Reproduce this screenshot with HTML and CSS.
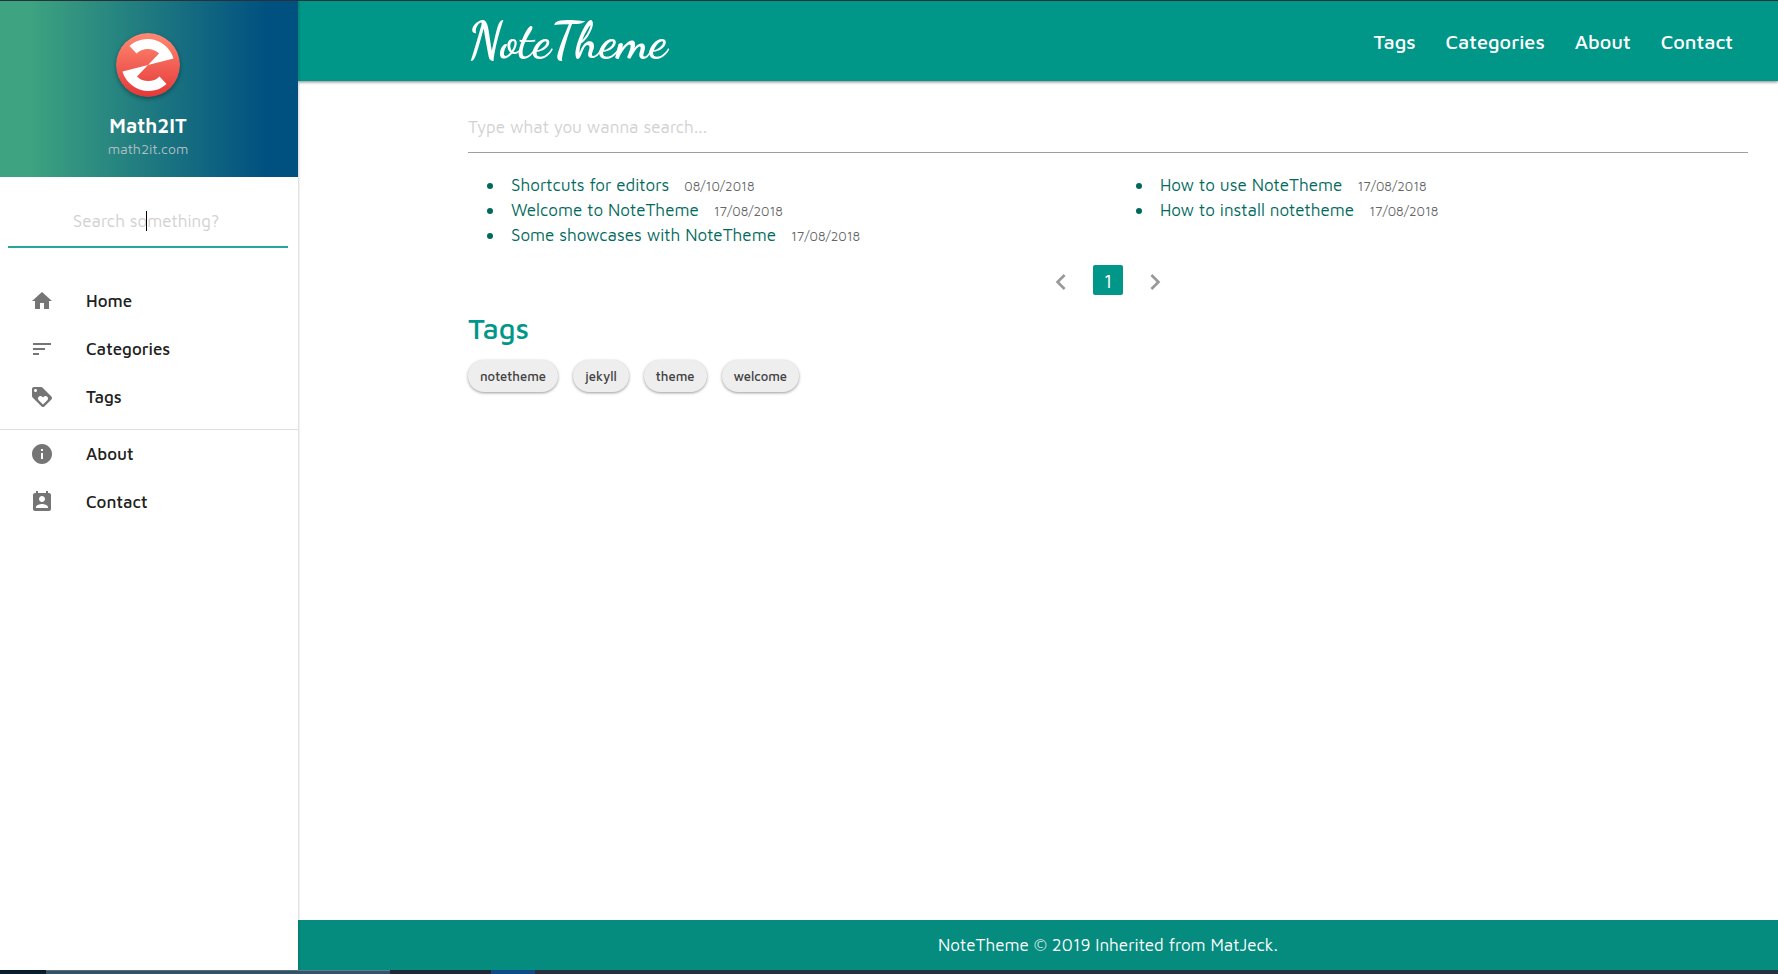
FILE: index.html
```html
<!DOCTYPE html>
<html lang="en">
<head>
<meta charset="utf-8">
<meta name="viewport" content="width=device-width, initial-scale=1">
<title>NoteTheme</title>
<link rel="stylesheet" href="styles.css">
</head>
<body>
<div class="layout">
  <aside class="sidebar">
    <div class="profile">
      <svg class="profile-logo" viewBox="0 0 64 64" aria-hidden="true">
        <defs><linearGradient id="badge" x1="0" y1="0" x2="0" y2="1"><stop offset="0" stop-color="#ff8a73"/><stop offset="1" stop-color="#e53737"/></linearGradient></defs>
        <circle cx="32" cy="32" r="32" fill="url(#badge)"/>
        <path fill="#fff" d="M13.500 13A27 27 0 0 1 57.500 25.500L32 32L43 20.500A16 16 0 0 0 20.500 20.500Z"/>
        <path fill="#fff" d="M50.500 51A27 27 0 0 1 6.500 38.500L32 32L21 43.500A16 16 0 0 0 43.500 43.500Z"/>
      </svg>
      <a class="profile-name" href="#">Math2IT</a>
      <a class="profile-site" href="#">math2it.com</a>
    </div>
    <form class="side-search">
      <input class="side-input" type="text" placeholder="Search something?" aria-label="Search something">
      <span class="caret"></span>
    </form>
    <nav class="side-nav" aria-label="Sidebar">
      <a class="side-link" href="#"><svg class="icon" viewBox="0 0 24 24"><path d="M10 20v-6h4v6h5v-8h3L12 3 2 12h3v8z"/></svg>Home</a>
      <a class="side-link" href="#"><svg class="icon" viewBox="0 0 24 24"><path d="M3 18h6v-2H3v2zM3 6v2h18V6H3zm0 7h12v-2H3v2z"/></svg>Categories</a>
      <a class="side-link" href="#"><svg class="icon" viewBox="0 0 24 24"><path d="M21.410 11.580l-9-9C12.050 2.220 11.550 2 11 2H4c-1.100 0-2 .9-2 2v7c0 .55.22 1.050.59 1.420l9 9c.36.36.86.58 1.410.58s1.050-.22 1.410-.59l7-7c.37-.36.59-.86.59-1.410s-.23-1.060-.59-1.420zM5.500 7C4.670 7 4 6.330 4 5.500S4.670 4 5.500 4 7 4.670 7 5.500 6.330 7 5.500 7zm11.770 8.270L13 19.540l-4.270-4.270C8.280 14.810 8 14.190 8 13.500c0-1.380 1.120-2.500 2.500-2.500.69 0 1.320.28 1.770.74l.73.72.73-.73c.45-.45 1.080-.73 1.770-.73 1.380 0 2.500 1.120 2.500 2.500 0 .69-.28 1.320-.73 1.770z"/></svg>Tags</a>
      <hr class="side-divider">
      <a class="side-link" href="#"><svg class="icon" viewBox="0 0 24 24"><path d="M12 2C6.480 2 2 6.480 2 12s4.480 10 10 10 10-4.480 10-10S17.520 2 12 2zm1 15h-2v-6h2v6zm0-8h-2V7h2v2z"/></svg>About</a>
      <a class="side-link" href="#"><svg class="icon" viewBox="0 0 24 24"><path d="M19 3h-1V1h-2v2H8V1H6v2H5c-1.110 0-2 .9-2 2v14c0 1.100.89 2 2 2h14c1.100 0 2-.9 2-2V5c0-1.100-.9-2-2-2zm-7 3c1.660 0 3 1.340 3 3s-1.340 3-3 3-3-1.340-3-3 1.340-3 3-3zm6 12H6v-1c0-2 4-3.100 6-3.100s6 1.100 6 3.100v1z"/></svg>Contact</a>
    </nav>
  </aside>
  <div class="page">
    <header class="topbar">
      <a class="brand" href="#">NoteTheme</a>
      <nav class="top-nav" aria-label="Main">
        <a class="top-link" href="#">Tags</a>
        <a class="top-link" href="#">Categories</a>
        <a class="top-link" href="#">About</a>
        <a class="top-link" href="#">Contact</a>
      </nav>
    </header>
    <main class="content">
      <input class="main-search" type="text" placeholder="Type what you wanna search..." aria-label="Search posts">
      <ul class="posts">
        <li class="post"><a class="post-link" href="#">Shortcuts for editors</a><time class="post-date">08/10/2018</time></li>
        <li class="post"><a class="post-link" href="#">Welcome to NoteTheme</a><time class="post-date">17/08/2018</time></li>
        <li class="post"><a class="post-link" href="#">Some showcases with NoteTheme</a><time class="post-date">17/08/2018</time></li>
        <li class="post"><a class="post-link" href="#">How to use NoteTheme</a><time class="post-date">17/08/2018</time></li>
        <li class="post"><a class="post-link" href="#">How to install notetheme</a><time class="post-date">17/08/2018</time></li>
      </ul>
      <nav class="pager" aria-label="Pages">
        <button class="pager-btn" type="button" aria-label="Previous"><svg class="chevron" viewBox="0 0 24 24"><path d="M15.410 7.410L14 6l-6 6 6 6 1.410-1.410L10.830 12z"/></svg></button>
        <button class="pager-btn pager-current" type="button" aria-current="page">1</button>
        <button class="pager-btn" type="button" aria-label="Next"><svg class="chevron" viewBox="0 0 24 24"><path d="M10 6L8.590 7.410 13.170 12l-4.580 4.590L10 18l6-6z"/></svg></button>
      </nav>
      <h2 class="heading">Tags</h2>
      <div class="chips">
        <a class="chip" href="#">notetheme</a>
        <a class="chip" href="#">jekyll</a>
        <a class="chip" href="#">theme</a>
        <a class="chip" href="#">welcome</a>
      </div>
    </main>
    <footer class="footer">NoteTheme © 2019 Inherited from MatJeck.</footer>
  </div>
</div>
<div class="taskbar"><span class="task-start"></span><span class="task-search"></span><span class="task-gap"></span><span class="task-active"></span></div>
</body>
</html>
```
FILE: styles.css
```css
* { box-sizing: border-box; }

body {
  margin: 0;
  min-height: 100vh;
  display: flex;
  flex-direction: column;
  border-top: 1px solid #263238;
  background: #fff;
  color: #212121;
  font-family: "Maven Pro", "Noto Sans", sans-serif;
  font-size: 17px;
}

a { color: inherit; text-decoration: none; }
input, button { font: inherit; border: 0; border-radius: 0; background: none; padding: 0; outline: 0; appearance: none; }

.layout { flex: 1; display: flex; }

.sidebar {
  position: relative;
  flex: 0 0 298px;
  background: #fff;
  box-shadow: 0 0 3px rgba(0, 0, 0, .3);
}

.profile {
  height: 176px;
  padding: 32px 2px 0 0;
  display: flex;
  flex-direction: column;
  align-items: center;
  background: linear-gradient(to right, #3da380 10%, #005080 90%);
}
.profile-logo { width: 64px; height: 64px; border-radius: 50%; box-shadow: 0 2px 4px rgba(0, 0, 0, .35); }
.profile-name { margin-top: 16px; color: #fff; font-size: 20px; line-height: 26px; font-weight: 600; }
.profile-site { color: #b2bfc5; font-size: 14px; line-height: 20px; }

.side-search { position: relative; padding: 18px 10px 0 8px; }
.side-input {
  width: 100%;
  height: 53px;
  padding-right: 4px;
  border-bottom: 2px solid #26a69a;
  text-align: center;
}
.side-input::placeholder, .main-search::placeholder { color: #d1d1d1; opacity: 1; }
.caret { position: absolute; left: 146px; top: 34px; width: 1px; height: 20px; background: #000; }

.side-nav { padding-top: 29px; font-weight: 500; }
.side-link { display: flex; align-items: center; gap: 32px; height: 48px; padding: 0 30px; }
.icon { width: 24px; height: 24px; fill: #757575; }
.side-divider { height: 1px; margin: 8px 0 0; border: 0; background: #e0e0e0; }

.page { flex: 1; min-width: 0; display: flex; flex-direction: column; }

.topbar {
  display: flex;
  align-items: center;
  justify-content: space-between;
  height: 80px;
  padding: 0 30px 0 170px;
  background: #009688;
  color: #fff;
  box-shadow: 0 1px 3px rgba(0, 0, 0, .5);
}
.brand { font: bold 50px "Dancing Script", "Liberation Serif", serif; }
.top-nav { display: flex; }
.top-link { padding: 0 15px; font-size: 20px; font-weight: 500; }

.content { flex: 1; padding: 21px 30px 0 170px; }
.main-search { display: block; width: 100%; height: 51px; border-bottom: 1px solid #9e9e9e; }

.posts { columns: 2; column-gap: 18px; margin: 20px 0 0; padding: 0; list-style: none; }
.post {
  display: flex;
  align-items: baseline;
  height: 25px;
  padding-left: 19px;
  line-height: 25px;
  color: #00695c;
  break-inside: avoid;
  font-weight: 300;
}
.post::before { content: ""; align-self: center; width: 6px; height: 6px; margin-right: 18px; border-radius: 50%; background: currentColor; }
.post-date { margin-left: 15px; font-size: 13px; color: #666; }

.pager { display: flex; justify-content: center; gap: 17px; margin-top: 16px; }
.pager-btn { display: flex; align-items: center; justify-content: center; width: 30px; height: 30px; font-size: 20px; }
.pager-current { border-radius: 2px; background: #009688; color: #fff; }
.chevron { flex: none; width: 32px; height: 32px; margin-top: 4px; fill: #999; }

.heading { margin: 16px 0 0; color: #009688; font-size: 29px; line-height: 34px; font-weight: 500; }

.chips { display: flex; flex-wrap: wrap; gap: 15px; margin-top: 15px; }
.chip {
  height: 32px;
  padding: 0 12px;
  border-radius: 16px;
  background: #eee;
  box-shadow: 0 1px 3px rgba(0, 0, 0, .4);
  color: #424242;
  font-size: 13px;
  line-height: 32px;
  font-weight: 500;
}

.footer { height: 50px; padding: 0 30px 0 170px; line-height: 50px; background: #058c7f; color: #fff; text-align: center; }

.taskbar { display: flex; height: 4px; background: #26303f; }
.task-start { width: 46px; background: #071e33; }
.task-search { width: 344px; background: #34546a; border-top: 1px solid #607b8c; }
.task-gap { width: 101px; background: #202938; }
.task-active { width: 44px; background: #0f4c87; }
```
